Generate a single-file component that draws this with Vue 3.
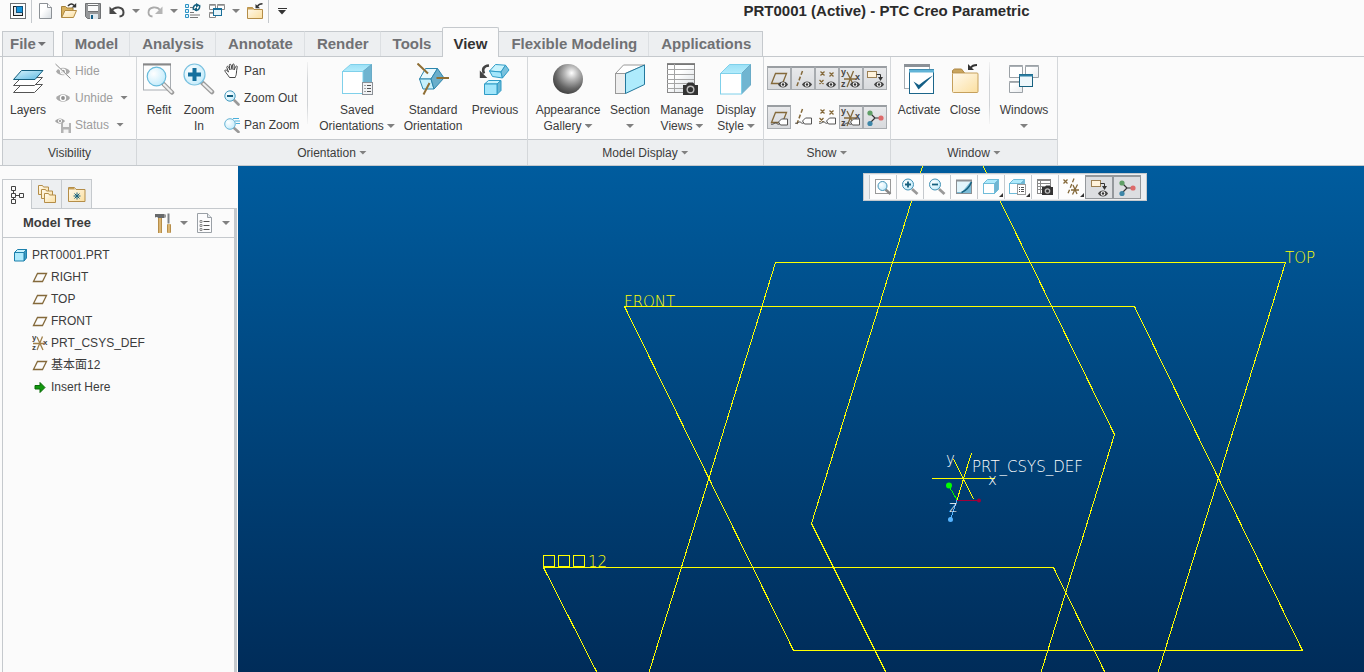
<script setup>
const tabs = [
  { name: 'Model' },
  { name: 'Analysis' },
  { name: 'Annotate' },
  { name: 'Render' },
  { name: 'Tools' },
  { name: 'View', active: true },
  { name: 'Flexible Modeling' },
  { name: 'Applications' },
]

const quick = [
  { icon: 'new', label: 'New' },
  { icon: 'open', label: 'Open' },
  { icon: 'save', label: 'Save' },
  { icon: 'undo', label: 'Undo', menu: true },
  { icon: 'redo', label: 'Redo', menu: true },
  { icon: 'regen', label: 'Regenerate' },
  { icon: 'wins', label: 'Switch window', menu: true },
  { icon: 'closefile', label: 'Close file' },
]

const groups = [
  {
    name: 'Visibility', cls: 'visibility', items: [
      { icon: 'layers', lines: ['Layers'] },
      { rows: [
        { icon: 'hide', label: 'Hide', off: true },
        { icon: 'unhide', label: 'Unhide', off: true, menu: true },
        { icon: 'status', label: 'Status', off: true, menu: true },
      ] },
    ],
  },
  {
    name: 'Orientation', cls: 'orientation', menu: true, items: [
      { icon: 'refit', lines: ['Refit'] },
      { icon: 'zoomin', lines: ['Zoom', 'In'] },
      { rows: [
        { icon: 'pan', label: 'Pan' },
        { icon: 'zoomout', label: 'Zoom Out' },
        { icon: 'panzoom', label: 'Pan Zoom' },
      ] },
      { sep: true },
      { icon: 'saved', lines: ['Saved', 'Orientations'], menu: true },
      { icon: 'standard', lines: ['Standard', 'Orientation'] },
      { icon: 'previous', lines: ['Previous'] },
    ],
  },
  {
    name: 'Model Display', cls: 'display', menu: true, items: [
      { icon: 'ball', lines: ['Appearance', 'Gallery'], menu: true },
      { icon: 'section', lines: ['Section', ''], menu: true },
      { icon: 'manage', lines: ['Manage', 'Views'], menu: true },
      { icon: 'dstyle', lines: ['Display', 'Style'], menu: true },
    ],
  },
  {
    name: 'Show', cls: 'show', menu: true, items: [
      { toggles: [
        { icon: 'plane', over: 'eye', on: true, label: 'Plane display' },
        { icon: 'axis', over: 'eye', on: true, label: 'Axis display' },
        { icon: 'points', over: 'eye', on: true, label: 'Point display' },
        { icon: 'csys', over: 'eye', on: true, label: 'Csys display' },
        { icon: 'anno', over: 'eye', on: true, label: 'Annotation display' },
        { icon: 'plane', over: 'tag', on: true, label: 'Plane tag display' },
        { icon: 'axis', over: 'tag', label: 'Axis tag display' },
        { icon: 'points', over: 'tag', label: 'Point tag display' },
        { icon: 'csys', over: 'tag', on: true, label: 'Csys tag display' },
        { icon: 'spin', on: true, label: 'Spin center' },
      ] },
    ],
  },
  {
    name: 'Window', cls: 'window', menu: true, items: [
      { icon: 'activate', lines: ['Activate'] },
      { icon: 'close', lines: ['Close'] },
      { sep: true },
      { icon: 'windows', lines: ['Windows', ''], menu: true },
    ],
  },
]

const tree = [
  { icon: 'part', label: 'PRT0001.PRT', root: true },
  { icon: 'tplane', label: 'RIGHT' },
  { icon: 'tplane', label: 'TOP' },
  { icon: 'tplane', label: 'FRONT' },
  { icon: 'tcsys', label: 'PRT_CSYS_DEF' },
  { icon: 'tplane', label: '基本面12' },
  { icon: 'insert', label: 'Insert Here' },
]

const viewTools = [
  { icon: 'v-refit', label: 'Refit' },
  { icon: 'v-in', label: 'Zoom in' },
  { icon: 'v-out', label: 'Zoom out' },
  { icon: 'v-repaint', label: 'Repaint' },
  { icon: 'v-style', label: 'Display style', corner: true },
  { icon: 'v-saved', label: 'Saved orientations', corner: true },
  { icon: 'v-manage', label: 'View manager' },
  { icon: 'v-datum', label: 'Datum display filters', corner: true },
  { icon: 'anno', over: 'eye', label: 'Annotation display', on: true },
  { icon: 'spin', label: 'Spin center', on: true },
]
</script>

<template>
  <div class="app">
    <svg class="defs" aria-hidden="true">
      <defs>
        <linearGradient id="gSheet" x1="0" y1="0" x2="1" y2="1"><stop offset="0" stop-color="#d8f4fd" /><stop offset="1" stop-color="#5cb9e2" /></linearGradient>
        <linearGradient id="gPaper" x1="0" y1="0" x2="1" y2="1"><stop offset="0.4" stop-color="#fff" /><stop offset="1" stop-color="#d5dbe0" /></linearGradient>
        <linearGradient id="gFolder" x1="0" y1="0" x2="1" y2="1"><stop offset="0" stop-color="#fffaf0" /><stop offset="1" stop-color="#fbdf9f" /></linearGradient>
        <linearGradient id="gTop" x1="0" y1="0" x2="0" y2="1"><stop offset="0" stop-color="#9be0f6" /><stop offset="1" stop-color="#b4edfc" /></linearGradient>
        <linearGradient id="gWood" x1="0" y1="0" x2="1" y2="0"><stop offset="0" stop-color="#a57a36" /><stop offset=".5" stop-color="#ecc987" /><stop offset="1" stop-color="#a57a36" /></linearGradient>
        <radialGradient id="gLens" cx=".35" cy=".35" r=".75"><stop offset="0" stop-color="#fff" /><stop offset="1" stop-color="#bfeafb" /></radialGradient>
        <radialGradient id="gBall" cx=".62" cy=".3" r=".75"><stop offset="0" stop-color="#fff" /><stop offset=".3" stop-color="#b9b9b9" /><stop offset=".7" stop-color="#666" /><stop offset="1" stop-color="#3d3d3d" /></radialGradient>
      </defs>

      <symbol id="appmenu" viewBox="0 0 16 16"><rect x=".5" y=".5" width="15" height="15" fill="#fff" stroke="#6d7175" /><rect x="3.500" y="3.500" width="9" height="9" fill="#dfe6ea" stroke="#222" /><rect x="6.500" y="3.500" width="6" height="6" fill="#1795dc" stroke="#12527c" /></symbol>
      <symbol id="new" viewBox="0 0 16 16"><path d="M2.500.500h8l4 4v11h-12z" fill="url(#gPaper)" stroke="#8c9196" /><path d="M10.500.500v4h4" fill="#fff" stroke="#8c9196" /></symbol>
      <symbol id="open" viewBox="0 0 16 16"><path d="M.5 14.500V3.500h4l1.500 1.500h6v3" fill="#d9b25f" stroke="#a5823d" /><path d="M.7 14.500l3.300-7h11.500l-3 7z" fill="url(#gFolder)" stroke="#b28b42" /><path d="M7 3c2-2.500 4.500-2.500 6-.6" fill="none" stroke="#333" stroke-width="1.600" /><path d="M15.200 0v4.600h-4.600z" fill="#333" /></symbol>
      <symbol id="save" viewBox="0 0 16 16"><path d="M.5.500h15v15H2.500l-2-2z" fill="#96989a" stroke="#707274" /><rect x="3" y="1" width="10" height="7" fill="#fafafa" /><path d="M3 2.500h10M3 8.500h10" stroke="#6e7072" /><rect x="5" y="11" width="8" height="5" fill="#dfe7ec" /><rect x="6" y="12" width="2" height="4" fill="#145e86" /></symbol>
      <symbol id="undo" viewBox="0 0 16 16"><path d="M2.500 7.500C6 2.800 14.500 3.500 14.500 9.500c0 2-1.500 3.800-4 4" fill="none" stroke="#474747" stroke-width="2" /><path d="M.5 3.500v7.500h7.500z" fill="#474747" /></symbol>
      <symbol id="redo" viewBox="0 0 16 16"><path d="M13.500 7.500C10 2.800 1.500 3.500 1.500 9.500c0 2 1.500 3.800 4 4" fill="none" stroke="#aaa" stroke-width="1.800" /><path d="M15.500 3.500v7.500H8z" fill="#b5b5b5" /></symbol>
      <symbol id="regen" viewBox="0 0 16 16"><path d="M.5 1.500h3v3h-3zM.5 6.500h3v3h-3zM.5 11.500h3v3h-3z" fill="#dff3fc" stroke="#2d93c4" /><path d="M5 4.500h3M5 9.500h4M5 12h10M5 14.500h8" stroke="#777" /><path d="M8.500 7c-1-4 2-6 4.500-5M14.500 2c1 4-2 6-4.500 5" fill="none" stroke="#15607f" stroke-width="1.500" /><path d="M11 0l4 2.300-4 2.300zM12 4.200L8.200 6.500l3.800 2z" fill="#15607f" /></symbol>
      <symbol id="wins" viewBox="0 0 16 16"><path d="M.5 1.500h6v5h-6zM8.500 1.500h7v5h-7zM.5 9.500h6v5h-6z" fill="#fff" stroke="#888" /><path d="M.5 2.500h6M8.500 2.500h7M.5 10.500h6" stroke="#aaa" /><rect x="4.500" y="5.500" width="8" height="7" fill="#e6f5fb" stroke="#1a6f99" /><path d="M4.500 6.500h8" stroke="#1a6f99" /></symbol>
      <symbol id="closefile" viewBox="0 0 16 16"><path d="M.5 15.500V4.500h5l1.500 2h8.500v9z" fill="url(#gFolder)" stroke="#b48d48" /><path d="M.5 6V4.500h5L7 6.500H1z" fill="#c8a055" /><path d="M15.500.8c-2.500 0-4 .6-5 2.500" fill="none" stroke="#333" stroke-width="1.500" /><path d="M8.500 1v4.200h4.500z" fill="#333" /></symbol>

      <symbol id="layers" viewBox="0 0 32 32"><g stroke="#555"><path d="M1.500 29.500l8-8h21l-8 8z" fill="#fff" /><path d="M1.500 22.500l8-8h21l-8 8z" fill="#fff" /></g><path d="M1.500 16.500l8-9h21.500l-8 9z" fill="url(#gSheet)" stroke="#15607f" /></symbol>
      <symbol id="hide" viewBox="0 0 16 16"><path d="M1 8.500C4 3.500 12 3.500 15 8.500 12 13.500 4 13.500 1 8.500z" fill="#a9a9a9" /><circle cx="8" cy="8.500" r="3" fill="#fff" /><circle cx="8" cy="8.500" r="1.800" fill="#8f8f8f" /><path d="M.5 2L14.500 15" stroke="#fbfbfb" stroke-width="2" /><path d="M.5 1L15.500 15.500" stroke="#8d8d8d" /></symbol>
      <symbol id="unhide" viewBox="0 0 16 16"><path d="M1 8C4 3 12 3 15 8 12 13 4 13 1 8z" fill="#a9a9a9" /><circle cx="8" cy="8" r="3.200" fill="#fff" /><circle cx="8" cy="8" r="1.900" fill="#8f8f8f" /></symbol>
      <symbol id="status" viewBox="0 0 16 16"><path d="M0 4C2.500.5 7.500.5 10 4 7.500 7.500 2.500 7.500 0 4z" fill="#a5a5a5" /><circle cx="5" cy="4" r="2" fill="#fff" /><circle cx="5" cy="4" r="1" fill="#888" /><path d="M6 6h10v10H6z" fill="#b3b3b3" /><path d="M8 6h6v4H8zM8.500 12.500h5V16h-5z" fill="#f5f5f5" /></symbol>
      <symbol id="refit" viewBox="0 0 32 32"><rect x=".5" y="1" width="27" height="26" fill="#fdfdfd" stroke="#a9aeb3" /><path d="M0 1.500h28" stroke="#888" stroke-width="2" /><path d="M20 20.500l9 9" stroke="#9b9b9b" stroke-width="4.500" stroke-linecap="round" /><path d="M21 21.500l7.500 7.500" stroke="#eee" stroke-width="2.200" stroke-linecap="round" /><circle cx="13.500" cy="13.500" r="9.300" fill="url(#gLens)" stroke="#67bbdc" stroke-width="1.200" /></symbol>
      <symbol id="zoomin" viewBox="0 0 32 32"><path d="M19 19.500l10 9.500" stroke="#9b9b9b" stroke-width="4.500" stroke-linecap="round" /><path d="M20.500 21l8 7.500" stroke="#eee" stroke-width="2.200" stroke-linecap="round" /><circle cx="11.500" cy="11.500" r="10.500" fill="url(#gLens)" stroke="#7cc2e0" stroke-width="1.200" /><path d="M11.500 5v13M5 11.500h13" stroke="#15709e" stroke-width="4" /></symbol>
      <symbol id="pan" viewBox="0 0 16 16"><path d="M5.500 14.500C4 12 2 10 1 8.200c-.5-1.200.8-1.800 1.800-.8L4.500 9 2.800 4.500c-.3-1.300 1.200-1.600 1.700-.5L6 7 5.300 2.300c0-1.300 1.500-1.400 1.800-.2L8 6.500l.5-4.700c.3-1.200 1.700-1 1.700.2L10 7l1.700-3.500c.6-1 1.800-.5 1.500.7-.5 2.300-.7 4-.8 6 0 2-1 3-1.200 4.300z" fill="#fff" stroke="#444" /></symbol>
      <symbol id="zoomout" viewBox="0 0 16 16"><path d="M10.500 10.500l4 4" stroke="#999" stroke-width="2.600" stroke-linecap="round" /><circle cx="6" cy="6" r="5.200" fill="url(#gLens)" stroke="#4b9dbf" /><path d="M3 6h6" stroke="#15607f" stroke-width="2" /></symbol>
      <symbol id="panzoom" viewBox="0 0 16 16"><path d="M10 11l4.500 4" stroke="#999" stroke-width="2.600" stroke-linecap="round" /><circle cx="6" cy="7" r="5.300" fill="url(#gLens)" stroke="#68b4d5" /><path d="M9 1.500h6M11 4h5M12 6.500h4" stroke="#4bb0dc" /></symbol>
      <symbol id="saved" viewBox="0 0 32 32"><path d="M1.500 8.500l8-7h21l-8.500 7z" fill="url(#gTop)" stroke="#7fd0ea" /><path d="M22 8.500l8.500-7V23L22 30.500z" fill="#6fb4d0" stroke="#69abc7" /><rect x="1.500" y="8.500" width="20.500" height="22" fill="#fff" stroke="#7fd0ea" /><rect x="21.500" y="19.500" width="10" height="12" fill="#f2f3f5" stroke="#8b9096" /><path d="M26 22.500h4M26 25.500h4M26 28.500h4M23.500 22.500h1M23.500 25.500h1M23.500 28.500h1" stroke="#555" /></symbol>
      <symbol id="standard" viewBox="0 0 32 32"><g stroke="#2c86ad" stroke-linejoin="round"><path d="M2.500 16l6-10.500h12L14 16z" fill="#e9f9fe" /><path d="M2.500 16H14l3 10H6z" fill="#c5f0fc" /><path d="M20.500 5.500L27 15 17 26l-3-10z" fill="#69aecb" /></g><g stroke="#8f6f35" stroke-width="2"><path d="M.5.500l10.500 10M19.500 15H32M12.500 20L6.500 31.500" /></g></symbol>
      <symbol id="previous" viewBox="0 0 32 32"><path d="M10 2.500C4.500 3 3 6 5 10.500" fill="none" stroke="#444" stroke-width="2.600" /><path d="M.8 7.500V15h7.500z" fill="#444" /><g stroke="#2f9cc7" stroke-linejoin="round"><path d="M10.500 8l6-6.500 10 .7L22 9z" fill="#c9f3fd" /><path d="M10.500 8L22 9l1.500 6-10-1.500z" fill="#a3e6fb" /><path d="M26.500 2.200L30 7l-6.500 8L22 9z" fill="#79c1dd" /><path d="M5.500 21l4-3.500h12.500L18 21z" fill="#c9f3fd" /><path d="M18 21l4-3.500v10L18 31.500z" fill="#6bb6d3" /><path d="M5.500 21H18v10.500H5.500z" fill="#a3e6fb" /></g></symbol>
      <symbol id="ball" viewBox="0 0 32 32"><circle cx="16" cy="16" r="15" fill="url(#gBall)" /></symbol>
      <symbol id="section" viewBox="0 0 32 32"><path d="M1.500 10.500l8-8.500H31l-20 8.500z" fill="#fff" stroke="#999" /><rect x="1.500" y="10.500" width="10" height="20" fill="#eee" stroke="#999" /><path d="M11.500 10.500L30.500 2v19.500l-19 9z" fill="#aeebfc" stroke="#23789d" /></symbol>
      <symbol id="manage" viewBox="0 0 32 32"><rect x="1.500" y=".5" width="27" height="29" fill="url(#gPaper)" stroke="#888" /><path d="M1 1.500h28" stroke="#777" /><path d="M8.500 1v28M1 6.500h27M1 11.500h27M1 16.500h27M1 20.500h27M1 25.500h27" stroke="#a5a5a5" /><path d="M17 22h3l2-2.500h5l2 2.500h3v10H17z" fill="#333" /><circle cx="24.500" cy="26.500" r="4" fill="#bbb" /><circle cx="24.500" cy="26.500" r="2.600" fill="#333" /></symbol>
      <symbol id="dstyle" viewBox="0 0 32 32"><path d="M.5 10.500l9-9h21l-9 9z" fill="url(#gTop)" stroke="#7fd0ea" /><path d="M21.500 10.500l9-9V22l-9 9z" fill="#70b5d1" stroke="#69abc7" /><rect x=".5" y="10.500" width="21" height="20.500" fill="#fff" stroke="#7fd0ea" /></symbol>
      <symbol id="activate" viewBox="0 0 32 32"><rect x="1.500" y="1.500" width="25" height="24" fill="#fff" stroke="#a7adb2" /><path d="M1 2.500h26" stroke="#8b9197" stroke-width="3" /><rect x="6.500" y="6.500" width="24" height="24" fill="#fff" stroke="#1c668b" /><path d="M6 8h25" stroke="#62b4d7" stroke-width="3" /><path d="M10.500 18.500l5 8 14.500-14c-5 2.500-10 6-14 9.500z" fill="#145f86" /></symbol>
      <symbol id="close" viewBox="0 0 32 32"><path d="M3.500 10V7.500l2-1.500h7l3 4z" fill="#c9a55e" stroke="#ac8543" /><rect x="3.500" y="10" width="25.500" height="19.500" rx="1" fill="url(#gFolder)" stroke="#c5a05c" /><path d="M28 2c-3 0-5 .5-6.500 3" fill="none" stroke="#333" stroke-width="1.800" /><path d="M19 1v6h6z" fill="#333" /></symbol>
      <symbol id="windows" viewBox="0 0 32 32"><g fill="url(#gPaper)" stroke="#9ba1a6"><path d="M1.500 2.500h13v12h-13zM17.500 2.500h13v12h-13zM1.500 18.500h13v11h-13z" /></g><path d="M1 3.500h14M17 3.500h14M1 19.500h14" stroke="#aab0b5" /><rect x="11.500" y="11.500" width="13" height="12" fill="#eef7fb" stroke="#16607f" /><path d="M11 12.500h14" stroke="#2b7da2" stroke-width="2" /></symbol>

      <symbol id="plane" viewBox="0 0 24 24"><path d="M4.500 16.500l4-10h11l-4 10z" fill="none" stroke="#84693a" stroke-width="1.300" /></symbol>
      <symbol id="axis" viewBox="0 0 24 24"><path d="M11.500 4L5.500 20" stroke="#84693a" stroke-width="1.500" stroke-dasharray="4 2" /></symbol>
      <symbol id="points" viewBox="0 0 24 24"><path d="M5.500 4.500l4 4m0-4l-4 4M14.500 5.500l4 4m0-4l-4 4M4.500 13l4 4m0-4l-4 4" stroke="#84693a" stroke-width="1.300" /></symbol>
      <symbol id="csys" viewBox="0 0 24 24"><path d="M8 5l7 14M14.500 4L8 20M5 12h12" stroke="#84693a" stroke-width="1.300" /><g font-family="Liberation Sans, sans-serif" font-size="9" font-weight="bold" fill="#444"><text x="2" y="8">y</text><text x="2" y="20">z</text><text x="16" y="13">x</text></g></symbol>
      <symbol id="anno" viewBox="0 0 24 24"><rect x="4.500" y="4.500" width="9" height="6" fill="#fff3dc" stroke="#9b8054" /><path d="M13.500 7.500h4v3" fill="none" stroke="#333" /><path d="M15 10h5l-2.500 4z" fill="#333" /></symbol>
      <symbol id="spin" viewBox="0 0 24 24"><path d="M7 7l5 5-5 5M12 12h6" fill="none" stroke="#333" stroke-width="1.200" /><circle cx="7" cy="7" r="2.600" fill="#5f9e66" /><circle cx="18" cy="12" r="2.600" fill="#dd6a6a" /><circle cx="7" cy="17.500" r="2.600" fill="#3d86a8" /></symbol>
      <symbol id="eye" viewBox="0 0 24 24"><path d="M11 17.500c2-4 8-4 10 0-2 4-8 4-10 0z" fill="#444" /><circle cx="16" cy="17.500" r="2.300" fill="#fff" /><circle cx="16" cy="17.500" r="1.300" fill="#333" /></symbol>
      <symbol id="tag" viewBox="0 0 24 24"><path d="M4 18c2 1.500 4-2.500 6-.5s3-.5 4-.5" fill="none" stroke="#444" /><path d="M11.500 16l3-3h6v6h-7z" fill="#fff" stroke="#555" /></symbol>

      <symbol id="treeic" viewBox="0 0 16 18"><path d="M2.500.500h4v4h-4zM2.500 7.500h4v4h-4zM10.500 7.500h4v4h-4zM2.500 13.500h4v4h-4zM4.500 4.500v3M4.500 11.500v2M6.500 9.500h4" fill="none" stroke="#444" /></symbol>
      <symbol id="folders" viewBox="0 0 20 20"><g fill="url(#gFolder)" stroke="#b48d48"><path d="M1.500 10.500v-9h4l1 1.500h5v7.500z" /><path d="M4.500 14.500v-9h4l1 1.500h6v7.500z" /><path d="M7.500 18.500v-9h4l1 1.500h6v7.500z" /></g></symbol>
      <symbol id="favs" viewBox="0 0 20 20"><path d="M1.500 17.500v-14h6l1.500 2h9v12z" fill="url(#gFolder)" stroke="#b48d48" /><path d="M2 4h5l1 1.500H2z" fill="#c8a055" /><path d="M10 8.500v7M6.500 12h7M7.500 9.500l5 5M12.500 9.500l-5 5" stroke="#15607f" /></symbol>
      <symbol id="hammer" viewBox="0 0 18 20"><rect x="4" y="5" width="4" height="15" fill="url(#gWood)" /><path d="M1 1h9.500v4H4C3.500 3.500 2 4 1 4.500z" fill="#67696b" /><path d="M10 1.500h2v3h-2z" fill="#999" /><path d="M14.500.500v10" stroke="#7d8185" stroke-width="2" /><rect x="13" y="11" width="4" height="9" rx="1" fill="url(#gWood)" /></symbol>
      <symbol id="listic" viewBox="0 0 18 20"><path d="M1.500.500h10l4 4v15h-14z" fill="#fcfcfd" stroke="#9aa0a6" /><path d="M11.500.500v4h4" fill="#e4e8eb" stroke="#9aa0a6" /><path d="M7.500 8.500h6M7.500 12.500h6M7.500 16.500h6" stroke="#555" /><path d="M4 7.500h2v2H4zM4 11.500h2v2H4zM4 15.500h2v2H4z" fill="#fff" stroke="#777" stroke-width=".8" /></symbol>

      <symbol id="part" viewBox="0 0 16 16"><g stroke="#1d80ac" stroke-linejoin="round"><path d="M1.500 5.500l3-3h9l-2.500 3z" fill="#c9f3fd" /><path d="M11 5.500l2.500-3v8.500L11 14z" fill="#3f9cc2" /><rect x="1.500" y="5.500" width="9.500" height="8.500" fill="#aeeafc" /></g></symbol>
      <symbol id="tplane" viewBox="0 0 16 16"><path d="M1.500 12.500l4-8h9l-4 8z" fill="none" stroke="#84693a" stroke-width="1.300" /></symbol>
      <symbol id="tcsys" viewBox="0 0 16 16"><path d="M5 2l6 13M10.500 1.500L5 15M1 8.500h11" stroke="#a1804a" stroke-width="1.300" /><g font-family="Liberation Sans, sans-serif" font-size="8" font-weight="bold" fill="#444"><text x="0" y="5">y</text><text x="0" y="15">z</text><text x="11" y="10">x</text></g></symbol>
      <symbol id="insert" viewBox="0 0 16 16"><path d="M3 6.500h5V3.500l5 5-5 5V10H3z" fill="#12980f" stroke="#0a6a08" /></symbol>

      <symbol id="v-refit" viewBox="0 0 24 24"><rect x="4.500" y="4.500" width="15" height="14" fill="#fff" stroke="#999" /><path d="M14.500 14.500l5 4.500" stroke="#888" stroke-width="2.500" /><circle cx="11.500" cy="11" r="4.500" fill="url(#gLens)" stroke="#4392b5" /></symbol>
      <symbol id="v-in" viewBox="0 0 24 24"><path d="M14 14l5.500 5" stroke="#999" stroke-width="2.800" /><circle cx="10" cy="9.500" r="5.500" fill="url(#gLens)" stroke="#4392b5" /><path d="M7 9.500h6M10 6.500v6" stroke="#15607f" stroke-width="1.800" /></symbol>
      <symbol id="v-out" viewBox="0 0 24 24"><path d="M14 14l5.500 5" stroke="#999" stroke-width="2.800" /><circle cx="10" cy="9.500" r="5.500" fill="url(#gLens)" stroke="#4392b5" /><path d="M7 9.500h6" stroke="#15607f" stroke-width="1.800" /></symbol>
      <symbol id="v-repaint" viewBox="0 0 24 24"><rect x="4.500" y="5.500" width="15" height="13" fill="#7cbcd7" stroke="#8b8f93" /><path d="M5 6h14L10 17H5z" fill="#e2f5fc" /><path d="M4 5.500h16" stroke="#8b8f93" stroke-width="2" /><path d="M19.500 7c-2 5-5 8.500-10 10.500" fill="none" stroke="#15607f" stroke-width="1.500" /></symbol>
      <symbol id="v-style" viewBox="0 0 24 24"><g stroke="#6fbcd9"><path d="M4.500 8.500l4-4h11l-4 4z" fill="#aeeafc" /><path d="M15.500 8.500l4-4v10l-4 4z" fill="#70b5d1" /><rect x="4.500" y="8.500" width="11" height="10" fill="#fff" /></g></symbol>
      <symbol id="v-saved" viewBox="0 0 24 24"><g stroke="#6fbcd9"><path d="M3.500 8.500l4-4h11l-4 4z" fill="#aeeafc" /><path d="M14.500 8.500l4-4v10l-4 4z" fill="#70b5d1" /><rect x="3.500" y="8.500" width="11" height="10" fill="#fff" /></g><rect x="11.500" y="9.500" width="8" height="10" fill="#fff" stroke="#999" /><path d="M15 12.500h3M15 14.500h3M15 16.500h3M13 12.500h1M13 14.500h1M13 16.500h1" stroke="#555" /></symbol>
      <symbol id="v-manage" viewBox="0 0 24 24"><rect x="4.500" y="4.500" width="13" height="14" fill="#fff" stroke="#888" /><path d="M4.500 5.500h13M7.500 5v13M5 8.500h12M5 11.500h12M5 14.500h12" stroke="#888" /><path d="M9 12h3l1-1.500h4l1 1.500h2v8H9z" fill="#333" /><circle cx="14.500" cy="16" r="2.800" fill="#bbb" /><circle cx="14.500" cy="16" r="1.500" fill="#333" /></symbol>
      <symbol id="v-datum" viewBox="0 0 24 24"><g stroke="#84693a" stroke-width="1.300"><path d="M3.500 4.500l4 4m0-4l-4 4" /><path d="M14 3.500l-6 15" stroke-dasharray="4 2" /><path d="M13 10l4 9M17.500 9.500l-5 10M11 15h8" /></g></symbol>
    </svg>

    <header class="titlebar">
      <nav class="quick" aria-label="Quick access">
        <button class="qbtn" aria-label="Application menu"><svg class="s16"><use href="#appmenu" /></svg></button>
        <span class="qsep"></span>
        <template v-for="q in quick" :key="q.icon">
          <button class="qbtn" :aria-label="q.label"><svg class="s16"><use :href="'#' + q.icon" /></svg></button>
          <button v-if="q.menu" class="qmenu" :aria-label="q.label + ' options'"><i class="caret"></i></button>
        </template>
        <span class="qsep"></span>
        <button class="qbtn custom" aria-label="Customize toolbar"><i class="caret dark"></i></button>
      </nav>
      <h1>PRT0001 (Active) - PTC Creo Parametric</h1>
    </header>

    <nav class="tabs" aria-label="Ribbon tabs">
      <button class="tab file">File<i class="caret"></i></button>
      <button v-for="t in tabs" :key="t.name" class="tab" :class="{ active: t.active }">{{ t.name }}</button>
    </nav>

    <section class="ribbon">
      <div v-for="g in groups" :key="g.name" class="group" :class="g.cls">
        <div class="body">
          <template v-for="(it, i) in g.items" :key="i">
            <span v-if="it.sep" class="sep"></span>
            <div v-else-if="it.rows" class="rows">
              <button v-for="r in it.rows" :key="r.label" class="row" :class="{ off: r.off }">
                <svg class="s16"><use :href="'#' + r.icon" /></svg><span>{{ r.label }}</span><i v-if="r.menu" class="caret"></i>
              </button>
            </div>
            <div v-else-if="it.toggles" class="toggles">
              <button v-for="t in it.toggles" :key="t.label" class="toggle" :class="{ on: t.on }" :aria-pressed="!!t.on" :aria-label="t.label">
                <svg class="s24"><use :href="'#' + t.icon" /><use v-if="t.over" :href="'#' + t.over" /></svg>
              </button>
            </div>
            <button v-else class="big">
              <svg class="s32"><use :href="'#' + it.icon" /></svg>
              <span v-for="(l, n) in it.lines" :key="n" class="line">{{ l }}<i v-if="it.menu && n === it.lines.length - 1" class="caret"></i></span>
            </button>
          </template>
        </div>
        <button class="foot">{{ g.name }}<i v-if="g.menu" class="caret"></i></button>
      </div>
    </section>

    <main class="work">
      <aside class="side">
        <div class="sidetabs">
          <button class="stab on" aria-label="Model tree"><svg class="st"><use href="#treeic" /></svg></button>
          <button class="stab" aria-label="Folder browser"><svg class="s20"><use href="#folders" /></svg></button>
          <button class="stab" aria-label="Favorites"><svg class="s20"><use href="#favs" /></svg></button>
          <span class="fill"></span>
        </div>
        <div class="panel">
          <div class="panelhead">
            <h2>Model Tree</h2>
            <button class="tool" aria-label="Settings"><svg class="s18"><use href="#hammer" /></svg><i class="caret"></i></button>
            <button class="tool" aria-label="Show"><svg class="s18"><use href="#listic" /></svg><i class="caret"></i></button>
          </div>
          <ul class="tree">
            <li v-for="n in tree" :key="n.label" :class="{ root: n.root }"><svg class="s16"><use :href="'#' + n.icon" /></svg><span>{{ n.label }}</span></li>
          </ul>
        </div>
      </aside>

      <section class="view">
        <svg class="scene" viewBox="238 166 1126 506" preserveAspectRatio="xMinYMin slice">
          <g class="wire">
            <path d="M649 672.500L775.500 262.500H1285.500L1158 672.500" />
            <path d="M624.500 306.500H1134.500L1302.500 650.500H793.500z" />
            <path d="M922.500 166L811.500 523.500L886 672.500M983 166L1114.500 434.500L1041 672.500" />
            <path d="M597 672.500L543.500 567.500H1053.500L1105 672.500" />
            <path d="M543.500 555.500h11v11h-11zM558.500 555.500h11v11h-11zM573.500 555.500h11v11h-11z" />
            <path d="M932 478.500H995M971.500 453L957 500M953.500 459L973.500 499" />
          </g>
          <path class="ax red" d="M957 500.500H980" />
          <path class="ax green" d="M957 500L949.500 487" />
          <path class="ax blue" d="M957 500L950.500 519" />
          <circle cx="979" cy="500.500" r="2" fill="#a00038" />
          <circle cx="949" cy="485.500" r="3" fill="#0f0" />
          <circle cx="950.500" cy="519.500" r="2.500" fill="#56b4ff" />
          <g class="lbl">
            <text x="1285" y="263">TOP</text>
            <text x="624" y="307">FRONT</text>
            <text x="588" y="567">12</text>
          </g>
          <g class="lbl white">
            <text x="972" y="472">PRT_CSYS_DEF</text>
            <text x="946" y="464">y</text>
            <text x="988" y="485">x</text>
            <text x="949" y="512">z</text>
          </g>
        </svg>
        <div class="viewbar" role="toolbar" aria-label="View tools">
          <button v-for="v in viewTools" :key="v.label" class="vbtn" :class="{ on: v.on, corner: v.corner }" :aria-label="v.label">
            <svg class="s24"><use :href="'#' + v.icon" /><use v-if="v.over" :href="'#' + v.over" /></svg>
          </button>
        </div>
      </section>
    </main>
  </div>
</template>

<style>
body { background: #fbfbfb; }
</style>

<style scoped>
.app { display: flex; flex-direction: column; height: 100vh; overflow: hidden; background: #fbfbfb; color: #3c3c3c; font: 12px/16px "Liberation Sans", "Noto Sans CJK SC", sans-serif; }
.defs { position: absolute; width: 0; height: 0; }
button { margin: 0; padding: 0; border: 0; background: none; color: inherit; font: inherit; cursor: pointer; }
svg { display: block; flex: none; }
.s16 { width: 16px; height: 16px; }
.s18 { width: 18px; height: 20px; }
.s20 { width: 20px; height: 20px; }
.s24 { width: 24px; height: 24px; }
.s32 { width: 32px; height: 32px; }
.st { width: 16px; height: 18px; }
.caret { display: inline-block; flex: none; width: 8px; height: 4px; background: #808080; clip-path: polygon(0 0, 100% 0, 50% 100%); }
.caret.dark { width: 9px; height: 5px; background: #333; }

.titlebar { display: flex; flex: none; height: 23px; }
.quick { display: flex; align-items: flex-start; padding-left: 6px; }
.titlebar h1 { flex: 1; margin: 0; padding-left: 115px; text-align: center; color: #2b2b2b; font-size: 15px; line-height: 22px; font-weight: bold; }
.qbtn { display: flex; flex: none; align-items: center; justify-content: center; width: 24px; height: 22px; }
.qmenu { display: flex; flex: none; align-items: center; justify-content: center; width: 14px; height: 22px; }
.qsep { flex: none; width: 1px; height: 23px; margin: 0 1px; background: #c5c9cd; }
.custom { flex-direction: column; gap: 1px; }
.custom::before { content: ""; width: 9px; height: 1px; background: #333; }

.tabs { display: flex; flex: none; align-items: flex-end; height: 33px; padding-left: 2px; border-bottom: 1px solid #c5c9cd; }
.tab { height: 25px; padding: 0 11px 0 12px; border: 1px solid #c5c9cd; border-width: 1px 0 0 1px; border-left-color: #dcdfe2; background: #edeff1; color: #707174; font-size: 15px; line-height: 24px; font-weight: bold; white-space: nowrap; }
.tab:nth-child(2) { border-left-color: #c5c9cd; }
.tab:last-child { border-right: 1px solid #c5c9cd; }
.tab.file { display: flex; align-items: center; gap: 2px; margin-right: 8px; padding: 0 7px; border-right-width: 1px; border-left-color: #c5c9cd; }
.file .caret { background: #707174; }
.tab.active { height: 30px; margin-bottom: -1px; padding: 3px 11px 0 10px; border: 1px solid #c5c9cd; border-bottom: 0; border-radius: 2px 2px 0 0; background: #fbfbfb; color: #333; }
.tab.active + .tab { border-left: 0; }

.ribbon { display: flex; flex: none; border-bottom: 1px solid #c5c9cd; }
.group { display: flex; flex: none; flex-direction: column; border-right: 1px solid #d4d7da; box-sizing: border-box; }
.body { display: grid; height: 82px; box-sizing: border-box; }
.foot { display: flex; align-items: center; justify-content: center; gap: 3px; height: 26px; border-top: 1px solid #c5c9cd; background: #edeff1; }
.visibility { margin-left: 2px; border-left: 1px solid #c5c9cd; }
.visibility .body { grid-template-columns: 50px 83px; }
.orientation .body { grid-template-columns: 40px 40px 85px 7px 92px 60px 64px; padding-left: 2px; }
.display .body { grid-template-columns: 74px 50px 54px 54px; padding-left: 3px; }
.show .body { grid-template-columns: 120px; padding: 9px 3px 0; }
.window .body { grid-template-columns: 56px 36px 12px 58px; padding-right: 4px; }
.big { display: flex; flex-direction: column; align-items: center; justify-content: flex-start; padding-top: 6px; }
.big .s32 { margin-bottom: 7px; }
.line { display: flex; align-items: center; justify-content: center; gap: 3px; height: 16px; white-space: nowrap; }
.rows { display: flex; flex-direction: column; padding-left: 2px; }
.orientation .rows { padding-left: 5px; }
.row { display: flex; align-items: center; gap: 4px; height: 27px; white-space: nowrap; }
.row .caret { margin-left: 3px; }
.row.off { color: #9d9d9d; }
.sep { justify-self: center; width: 1px; height: 62px; margin-top: 5px; background: linear-gradient(#f2f2f2, #d0d3d6 30%, #d0d3d6 70%, #f5f5f5); }
.toggles { display: grid; grid-template-columns: repeat(5, 24px); grid-template-rows: 24px 24px; row-gap: 15px; }
.toggle { display: flex; align-items: center; justify-content: center; box-sizing: border-box; overflow: hidden; }
.toggle.on { border: 1px solid #a8acb0; border-top: 2px solid #9a9ea2; background: linear-gradient(#e8e9eb, #d8dadd); }

.work { display: flex; flex: 1; min-height: 0; }
.side { display: flex; flex: none; flex-direction: column; width: 238px; box-sizing: border-box; padding: 13px 1px 0 2px; }
.sidetabs { display: flex; flex: none; height: 30px; }
.stab { display: flex; align-items: center; justify-content: center; width: 30px; box-sizing: border-box; border: 1px solid #c5c9cd; border-left-width: 0; background: #edeff1; }
.stab.on { border-left-width: 1px; border-bottom: 0; background: #fbfbfb; }
.fill { flex: 1; border-bottom: 1px solid #c5c9cd; }
.panel { flex: 1; border-left: 1px solid #c5c9cd; border-right: 3px solid #c5c9cd; }
.panelhead { display: flex; align-items: center; height: 28px; padding: 0 4px 0 20px; border-bottom: 1px solid #c5c9cd; }
.panelhead h2 { flex: 1; margin: 0; font-size: 13px; line-height: 20px; font-weight: bold; }
.tool { display: flex; align-items: center; gap: 8px; margin-left: 8px; }
.tree { margin: 0; padding: 6px 0 0; list-style: none; }
.tree li { display: flex; align-items: center; gap: 3px; height: 22px; padding-left: 29px; white-space: nowrap; }
.tree li.root { padding-left: 10px; }

.view { position: relative; flex: 1; min-width: 0; background: linear-gradient(#005c9e, #002c59); }
.scene { width: 100%; height: 100%; }
.wire path { fill: none; stroke: #ff0; stroke-width: 1; shape-rendering: crispEdges; }
.ax { fill: none; stroke-width: 1; shape-rendering: crispEdges; }
.red { stroke: #a00038; }
.green { stroke: #0f0; }
.blue { stroke: #56b4ff; }
.lbl { fill: #ff0; font: 200 15px "DejaVu Sans Light", "DejaVu Sans", sans-serif; }
.lbl.white { fill: #fff; }
.viewbar { position: absolute; left: 625px; top: 7px; display: flex; width: 284px; box-sizing: border-box; padding: 1px 5px; border: 1px solid #c5c9cd; background: #edeff1; }
.vbtn { position: relative; display: flex; flex: 1; align-items: center; justify-content: center; min-width: 0; height: 24px; box-sizing: border-box; border-left: 1px solid #c5c9cd; background: #fdfdfd; }
.vbtn:last-child { border-right: 1px solid #c5c9cd; }
.vbtn.on { border: 1px solid #94989c; border-top-width: 2px; background: #dcdee1; }
.vbtn.corner::after { content: ""; position: absolute; right: 1px; bottom: 2px; border: 2px solid #333; border-top-color: transparent; border-left-color: transparent; }
</style>
